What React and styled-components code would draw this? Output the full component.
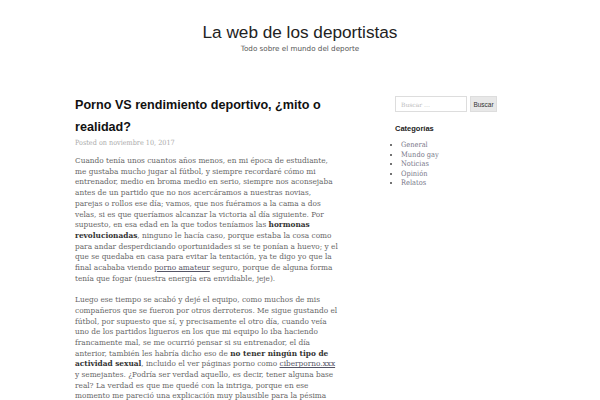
import React from "react";
import styled, { createGlobalStyle } from "styled-components";

const Global = createGlobalStyle`
  html, body { margin: 0; padding: 0; background: #fff; }
  body { width: 600px; height: 400px; overflow: hidden; }
`;

const Header = styled.header`
  text-align: center;
  padding-top: 21px;
`;

const SiteTitle = styled.h1`
  margin: 0;
  font-family: "Liberation Sans", Arial, sans-serif;
  font-weight: 400;
  font-size: 17.2px;
  line-height: 22px;
  color: #222;
`;

const Tagline = styled.p`
  margin: 1px 0 0;
  font-family: "DejaVu Sans", sans-serif;
  font-size: 7.2px;
  line-height: 10px;
  color: #555;
`;

const Layout = styled.div`
  display: flex;
  padding: 40px 0 0 75px;
  gap: 55px;
`;

const Main = styled.main`
  width: 265px;
`;

const PostTitle = styled.h2`
  margin: 0;
  font-family: "Liberation Sans", Arial, sans-serif;
  font-weight: 700;
  font-size: 12.6px;
  line-height: 22px;
  color: #111;
`;

const Meta = styled.div`
  font-family: "DejaVu Serif Condensed", "DejaVu Serif", serif;
  font-stretch: condensed;
  font-size: 7.2px;
  line-height: 10px;
  color: #aaa;
  margin-bottom: 7px;
`;

const Para = styled.p`
  margin: 0 0 10.7px;
  font-family: "DejaVu Serif Condensed", "DejaVu Serif", serif;
  font-stretch: condensed;
  font-size: 8.2px;
  line-height: 10.7px;
  color: #666;
  strong { color: #333; font-weight: 700; }
  a { color: #556; text-decoration: underline; }
`;

const Sidebar = styled.aside`
  width: 103px;
  padding-top: 2px;
`;

const SearchForm = styled.form`
  display: flex;
  gap: 3px;
`;

const SearchInput = styled.input`
  box-sizing: border-box;
  width: 72px;
  height: 16px;
  border: 1px solid #ddd;
  padding: 0 5px;
  font-family: "DejaVu Serif", serif;
  font-size: 6px;
  color: #999;
  outline: none;
  &::placeholder { color: #bbb; }
`;

const SearchButton = styled.button`
  box-sizing: border-box;
  width: 27px;
  height: 16px;
  border: 1px solid #ddd;
  background: #e8e8e8;
  padding: 0;
  font-family: "Liberation Sans", Arial, sans-serif;
  font-size: 6.5px;
  color: #333;
`;

const WidgetTitle = styled.h3`
  margin: 12px 0 6px;
  font-family: "Liberation Sans", Arial, sans-serif;
  font-weight: 700;
  font-size: 7.5px;
  line-height: 10px;
  color: #222;
`;

const CatList = styled.ul`
  margin: 0;
  padding-left: 6px;
  font-family: "DejaVu Serif Condensed", "DejaVu Serif", serif;
  font-stretch: condensed;
  font-size: 7.4px;
  color: #444;
  li { line-height: 9.5px; height: 9.5px; }
  a { color: #778; text-decoration: none; }
`;

export default function App() {
  return (
    <>
      <Global />
      <Header>
        <SiteTitle>La web de los deportistas</SiteTitle>
        <Tagline>Todo sobre el mundo del deporte</Tagline>
      </Header>
      <Layout>
        <Main>
          <PostTitle>Porno VS rendimiento deportivo, ¿mito o realidad?</PostTitle>
          <Meta>Posted on noviembre 10, 2017</Meta>
          <Para>
            Cuando tenía unos cuantos años menos, en mi época de estudiante, me gustaba mucho jugar al fútbol, y siempre recordaré cómo mi entrenador, medio en broma medio en serio, siempre nos aconsejaba antes de un partido que no nos acercáramos a nuestras novias, parejas o rollos ese día; vamos, que nos fuéramos a la cama a dos velas, si es que queríamos alcanzar la victoria al día siguiente. Por supuesto, en esa edad en la que todos teníamos las <strong>hormonas revolucionadas</strong>, ninguno le hacía caso, porque estaba la cosa como para andar desperdiciando oportunidades si se te ponían a huevo; y el que se quedaba en casa para evitar la tentación, ya te digo yo que la final acababa viendo <a href="#">porno amateur</a> seguro, porque de alguna forma tenía que fogar (nuestra energía era envidiable, jeje).
          </Para>
          <Para>
            Luego ese tiempo se acabó y dejé el equipo, como muchos de mis compañeros que se fueron por otros derroteros. Me sigue gustando el fútbol, por supuesto que sí, y precisamente el otro día, cuando veía uno de los partidos ligueros en los que mi equipo lo iba haciendo francamente mal, se me ocurrió pensar si su entrenador, el día anterior, también les habría dicho eso de <strong>no tener ningún tipo de actividad sexual</strong>, incluido el ver páginas porno como <a href="#">ciberporno.xxx</a> y semejantes. ¿Podría ser verdad aquello, es decir, tener alguna base real? La verdad es que me quedé con la intriga, porque en ese momento me pareció una explicación muy plausible para la pésima actuación de mi equipo.
          </Para>
        </Main>
        <Sidebar>
          <SearchForm onSubmit={(e) => e.preventDefault()}>
            <SearchInput placeholder="Buscar …" />
            <SearchButton type="submit">Buscar</SearchButton>
          </SearchForm>
          <WidgetTitle>Categorías</WidgetTitle>
          <CatList>
            <li><a href="#">General</a></li>
            <li><a href="#">Mundo gay</a></li>
            <li><a href="#">Noticias</a></li>
            <li><a href="#">Opinión</a></li>
            <li><a href="#">Relatos</a></li>
          </CatList>
        </Sidebar>
      </Layout>
    </>
  );
}
